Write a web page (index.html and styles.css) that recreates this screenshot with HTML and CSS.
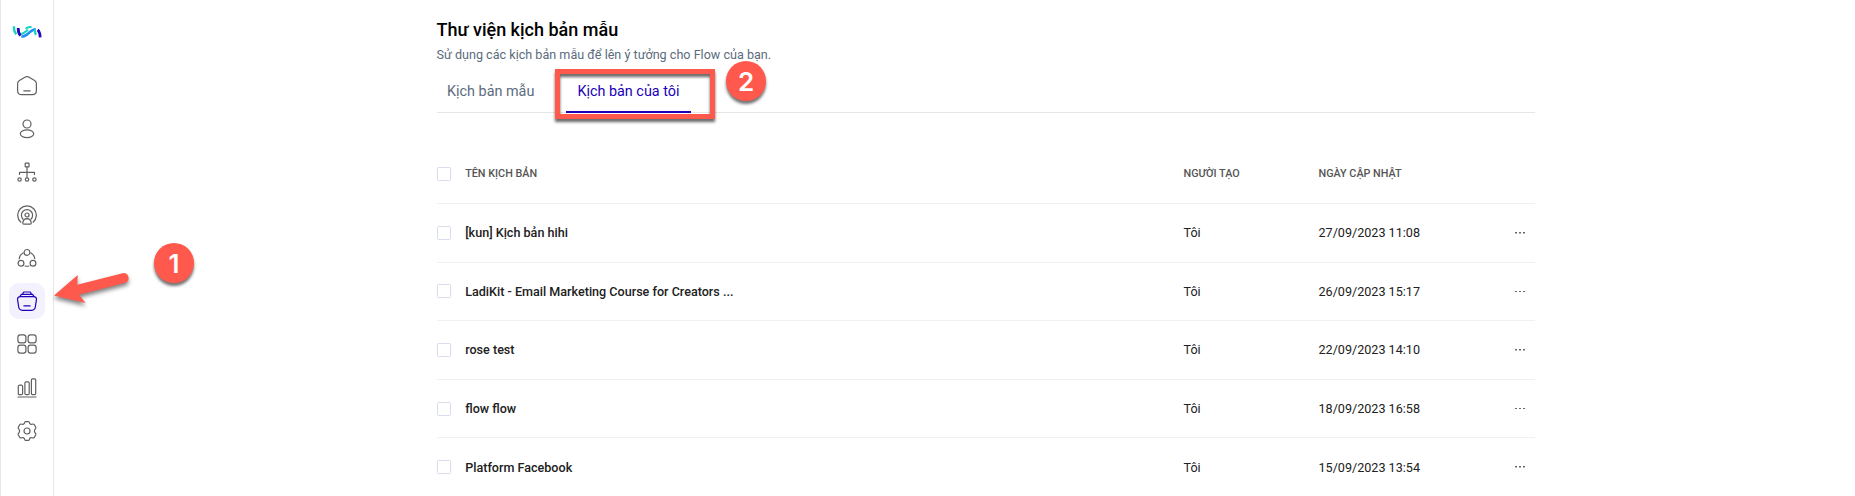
FILE: index.html
```html
<!DOCTYPE html>
<html lang="vi">
<head>
<meta charset="utf-8">
<title>Thư viện kịch bản mẫu</title>
<link rel="stylesheet" href="styles.css">
</head>
<body>
<div class="app">
  <nav class="sidebar">
    <svg class="logo" viewBox="0 0 30 14" fill="none" stroke-width="2.3">
      <path d="M1.9 1.2C1.7 5 2.8 7.6 4.3 9.2" stroke="#16d6c0"/>
      <path d="M9.2 9C12.3 8.4 14.2 6 16 4.8M13.6 3.8C15.4 2.2 17.6 1.7 19.6 2.2" stroke="#16d6c0" stroke-width="2"/>
      <path d="M9.3 11.5C15.5 12.3 17.6 4.4 23.8 4.2" stroke="#2490f5" stroke-width="2.6"/>
      <path d="M6.2 3C6.2 6.5 7 9 8.5 10.6" stroke="#2308b8" stroke-width="2.8"/>
      <path d="M22.9 4.7C22.7 6.9 22.9 8.4 24.1 9.9" stroke="#16d6c0"/>
      <path d="M25.6 4.9C27.4 6.3 28 8.6 28.2 12.3" stroke="#2308b8" stroke-width="2.8"/>
    </svg>
    <a class="item"><svg class="icon" viewBox="0 0 20 20"><path d="M8.3 1.1Q10 .1 11.7 1.1L17.6 4.5Q19.4 5.6 19.4 7.7V14.6Q19.4 18.7 15.3 18.7H4.7Q.6 18.7.6 14.6V7.7Q.6 5.6 2.4 4.5ZM6.8 14.8H13.2"/></svg></a>
    <a class="item"><svg class="icon" viewBox="0 0 20 20"><circle cx="10" cy="5" r="4"/><ellipse cx="10" cy="14.8" rx="6.7" ry="3.9"/></svg></a>
    <a class="item"><svg class="icon" viewBox="0 0 20 20"><rect x="8.2" y="1.1" width="3.8" height="3.8" rx=".4"/><path d="M10 5V15.3M2.5 12.4V10.3H17.5V12.4"/><circle cx="2.6" cy="17.5" r="1.7"/><circle cx="10" cy="17.5" r="1.7"/><circle cx="17.4" cy="17.5" r="1.7"/></svg></a>
    <a class="item"><svg class="icon" viewBox="0 0 20 20"><path d="M3.9 17.2A9.3 9.3 0 1 1 16.1 17.2M6.1 14.2A5.6 5.6 0 1 1 13.9 14.2"/><circle cx="10" cy="10" r="2"/><path d="M10 13.7C12.3 13.8 14 15.8 14.3 18Q14.3 19.2 13.2 19.2H6.8Q5.7 19.2 5.7 18C6 15.8 7.7 13.8 10 13.7Z"/></svg></a>
    <a class="item"><svg class="icon" viewBox="0 0 20 20"><circle cx="10" cy="4.4" r="2.9"/><circle cx="4" cy="15.2" r="2.9"/><circle cx="16" cy="15.2" r="2.9"/><path d="M6 4.9Q2.5 7 2.2 10.7M14 4.9Q17.5 7 17.8 10.7M8.1 18Q10 18.5 11.9 18"/></svg></a>
    <a class="item active"><svg class="icon" viewBox="0 0 20 20"><path d="M3.6 5.7H16.4Q19.8 5.7 19.4 8.8L18.3 16Q17.8 19.3 14.6 19.3H5.4Q2.2 19.3 1.7 16L.6 8.8Q.2 5.7 3.6 5.7ZM3 5.3 4.4 3.4H15.6L17 5.3M5.4 3.2 6.7 1H13.3L14.6 3.2M6.9 14.9H13.1"/></svg></a>
    <a class="item"><svg class="icon" viewBox="0 0 20 20"><rect x=".9" y=".9" width="8" height="8" rx="2.3"/><rect x="11.1" y=".9" width="8" height="8" rx="2.3"/><rect x=".9" y="11.1" width="8" height="8" rx="2.3"/><rect x="11.1" y="11.1" width="8" height="8" rx="2.3"/></svg></a>
    <a class="item"><svg class="icon" viewBox="0 0 20 20"><rect x="1.3" y="7.2" width="4.3" height="9.4" rx="1.2"/><rect x="7.9" y="3.8" width="4.3" height="12.8" rx="1.2"/><rect x="14.4" y=".9" width="4.3" height="15.7" rx="1.2"/><path d="M1 19H19"/></svg></a>
    <a class="item"><svg class="icon" viewBox="0 0 20 20"><circle cx="10" cy="10" r="3"/><path d="M8.5.7H11.5Q12.5.9 12.6 2.3Q13.3 3.8 15 3.2Q16.5 2.7 17.2 3.5L18.8 6.2Q19.2 7.2 18 8.2Q16.8 10 18 11.8Q19.2 12.8 18.8 13.8L17.2 16.5Q16.5 17.3 15 16.8Q13.3 16.2 12.6 17.7Q12.5 19.1 11.5 19.3H8.5Q7.5 19.1 7.4 17.7Q6.7 16.2 5 16.8Q3.5 17.3 2.8 16.5L1.2 13.8Q.8 12.8 2 11.8Q3.2 10 2 8.2Q.8 7.2 1.2 6.2L2.8 3.5Q3.5 2.7 5 3.2Q6.7 3.8 7.4 2.3Q7.5.9 8.5.7Z"/></svg></a>
  </nav>

  <main class="content">
    <h1 class="title">Thư viện kịch bản mẫu</h1>
    <p class="subtitle">Sử dụng các kịch bản mẫu để lên ý tưởng cho Flow của bạn.</p>
    <div class="tabs">
      <a class="tab">Kịch bản mẫu</a>
      <a class="tab selected">Kịch bản của tôi</a>
    </div>
    <div class="table">
      <div class="row head"><span class="check"></span><span>TÊN KỊCH BẢN</span><span>NGƯỜI TẠO</span><span>NGÀY CẬP NHẬT</span><span></span></div>
      <div class="row"><span class="check"></span><span class="name">[kun] Kịch bản hihi</span><span>Tôi</span><span>27/09/2023 11:08</span><svg class="more" viewBox="0 0 12 2"><path d="M0 0H2V2H0ZM5 0H7V2H5ZM10 0H12V2H10Z"/></svg></div>
      <div class="row"><span class="check"></span><span class="name">LadiKit - Email Marketing Course for Creators ...</span><span>Tôi</span><span>26/09/2023 15:17</span><svg class="more" viewBox="0 0 12 2"><path d="M0 0H2V2H0ZM5 0H7V2H5ZM10 0H12V2H10Z"/></svg></div>
      <div class="row"><span class="check"></span><span class="name">rose test</span><span>Tôi</span><span>22/09/2023 14:10</span><svg class="more" viewBox="0 0 12 2"><path d="M0 0H2V2H0ZM5 0H7V2H5ZM10 0H12V2H10Z"/></svg></div>
      <div class="row"><span class="check"></span><span class="name">flow flow</span><span>Tôi</span><span>18/09/2023 16:58</span><svg class="more" viewBox="0 0 12 2"><path d="M0 0H2V2H0ZM5 0H7V2H5ZM10 0H12V2H10Z"/></svg></div>
      <div class="row"><span class="check"></span><span class="name">Platform Facebook</span><span>Tôi</span><span>15/09/2023 13:54</span><svg class="more" viewBox="0 0 12 2"><path d="M0 0H2V2H0ZM5 0H7V2H5ZM10 0H12V2H10Z"/></svg></div>
    </div>
  </main>

  <svg class="arrow" width="90" height="50" viewBox="0 0 90 50"><path d="M4 25.5 27.8 5 27.2 14.7 72.7 3.2A5 5 0 0 1 75.3 12.8L29 24.8 35.6 33Z" fill="#ff584c"/></svg>
  <span class="badge one">1</span>
  <span class="highlight"></span>
  <span class="badge two">2</span>
</div>
</body>
</html>
```

FILE: styles.css
```css
* { box-sizing: border-box; }

body {
  margin: 0;
  background: #fff;
  color: #212121;
  font-family: Roboto, "Liberation Sans", sans-serif;
}

.app {
  position: relative;
  display: flex;
  height: 496px;
  overflow: hidden;
}

.sidebar {
  display: flex;
  flex: none;
  flex-direction: column;
  align-items: center;
  gap: 7.15px;
  width: 54px;
  border: solid #e6e6eb;
  border-width: 0 1px;
  padding-top: 25px;
}

.logo {
  flex: none;
  width: 30px;
  height: 14px;
  margin-bottom: 21.5px;
}

.item {
  display: flex;
  flex: none;
  align-items: center;
  justify-content: center;
  width: 36px;
  height: 36px;
  border-radius: 10px;
  color: #606060;
}

.item.active {
  background: #f3f1fe;
  color: #2000b8;
}

.icon {
  width: 20px;
  height: 20px;
  fill: none;
  stroke: currentColor;
  stroke-width: 1.2;
  stroke-linecap: round;
  stroke-linejoin: round;
}

.content {
  flex: none;
  width: 1098px;
  margin-left: 383px;
  padding-top: 18px;
}

.title {
  margin: 0 0 0 -0.5px;
  color: #000;
  font-size: 18px;
  font-weight: 500;
  line-height: 24px;
}

.subtitle {
  margin: 3px 0 0 -0.5px;
  color: #5b6b7e;
  font-size: 12.6px;
  line-height: 20px;
}

.tabs {
  display: flex;
  gap: 21.5px;
  height: 48px;
  border-bottom: 1px solid #e6e6e6;
}

.tab {
  height: 48px;
  padding: 17px 10.5px 0 10px;
  color: #5b6b7e;
  font-size: 14.4px;
  line-height: 20px;
}

.tab.selected {
  padding: 17px 11px 0;
  border-bottom: 2px solid #2000b8;
  color: #2000b8;
}

.table { padding-top: 32px; }

.row {
  display: grid;
  grid-template-columns: 28.2px 718.3px 135px 195.5px 12px;
  align-items: center;
  height: 58.6px;
  border-bottom: 1px solid #f1f1f1;
  font-size: 12.6px;
}

.head {
  height: 59px;
  padding-bottom: 1px;
  color: #555;
  font-size: 10.8px;
  font-weight: 500;
}

.name {
  font-size: 12.58px;
  font-weight: 500;
}

.check {
  width: 14px;
  height: 14px;
  border: 1px solid #d9dcec;
  border-radius: 1.5px;
}

.more {
  width: 12px;
  height: 1.6px;
  fill: #444;
}

.arrow {
  position: absolute;
  left: 50px;
  top: 270px;
  filter: drop-shadow(0 3px 2px rgba(0, 0, 0, .5));
}

.badge {
  position: absolute;
  width: 40px;
  height: 40px;
  border-radius: 50%;
  background: #ff584c;
  box-shadow: 0 3px 3px rgba(0, 0, 0, .55);
  color: #fff;
  font: 600 26px/41px Inter, "Liberation Sans", sans-serif;
  text-align: center;
}

.badge.one { left: 154px; top: 243px; }
.badge.two { left: 726px; top: 61px; }

.highlight {
  position: absolute;
  left: 555px;
  top: 69px;
  width: 160px;
  height: 50px;
  border: 5px solid #ff584c;
  filter: drop-shadow(0 3px 1.5px rgba(0, 0, 0, .6));
}
```
